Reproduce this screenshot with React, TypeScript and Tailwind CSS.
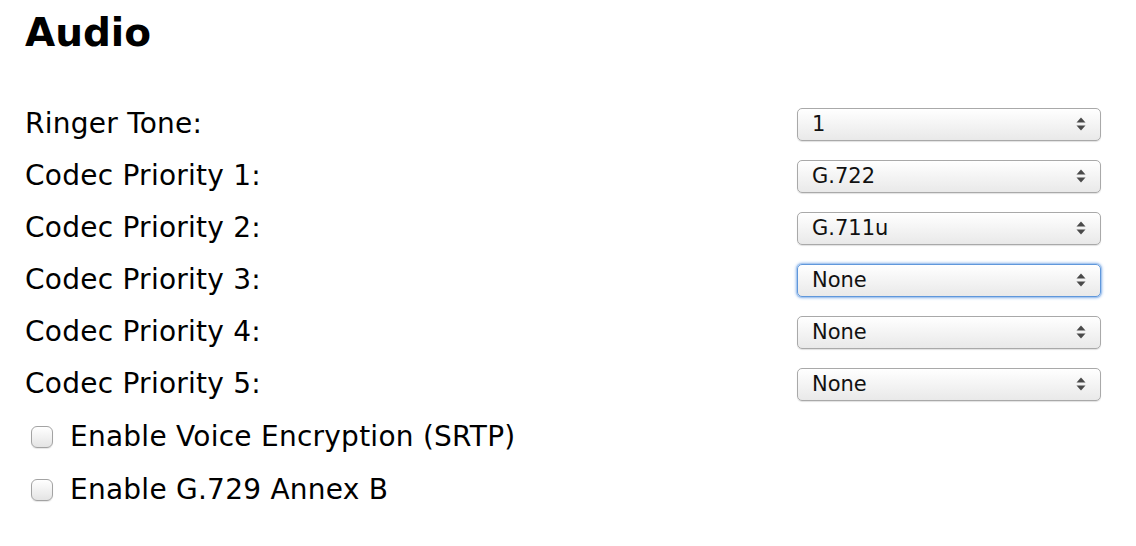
import React from 'react';

type SelectProps = {
  value: string;
  focused?: boolean;
};

function FakeSelect({ value, focused }: SelectProps) {
  return (
    <div
      className={
        focused
          ? 'flex h-[33px] w-[304px] items-center justify-between rounded-[5px] border border-[#5f97db] bg-gradient-to-b from-white to-[#e9e9e9] pl-[14px] pr-[14px] shadow-[0_0_0_1px_#a9c8ef,0_0_3px_1px_#8db6ea]'
          : 'flex h-[33px] w-[304px] items-center justify-between rounded-[5px] border border-[#a9a9a9] bg-gradient-to-b from-white to-[#e9e9e9] pl-[14px] pr-[14px] shadow-[0_1px_1px_rgba(0,0,0,0.12)]'
      }
    >
      <span className="text-[21px] leading-none text-[#111]">{value}</span>
      <svg width="10" height="14" viewBox="0 0 10 14">
        <path d="M5 0.5 L9.5 5.5 L0.5 5.5 Z" fill="#4a4a4a" />
        <path d="M0.5 8.5 L9.5 8.5 L5 13.5 Z" fill="#4a4a4a" />
      </svg>
    </div>
  );
}

function Checkbox() {
  return (
    <span className="block h-[22px] w-[22px] rounded-[6px] border border-[#a3a3a3] bg-gradient-to-b from-white to-[#e4e4e4] shadow-[0_1px_1px_rgba(0,0,0,0.1)]" />
  );
}

const rows = [
  { label: 'Ringer Tone:', value: '1' },
  { label: 'Codec Priority 1:', value: 'G.722' },
  { label: 'Codec Priority 2:', value: 'G.711u' },
  { label: 'Codec Priority 3:', value: 'None', focused: true },
  { label: 'Codec Priority 4:', value: 'None' },
  { label: 'Codec Priority 5:', value: 'None' },
];

const checks = ['Enable Voice Encryption (SRTP)', 'Enable G.729 Annex B'];

export default function App() {
  return (
    <div className="h-[546px] w-[1136px] bg-white pl-[25px] pr-[35px] font-['DejaVu_Sans',Verdana,sans-serif] text-black">
      <h1 className="pt-[9px] text-[39px] font-bold leading-[48px]">Audio</h1>
      <div className="mt-[41px]">
        {rows.map((r) => (
          <div key={r.label} className="flex h-[52px] items-center justify-between">
            <span className="text-[28px] tracking-[0.25px]">{r.label}</span>
            <FakeSelect value={r.value} focused={r.focused} />
          </div>
        ))}
        {checks.map((c) => (
          <div key={c} className="flex h-[53px] items-center pl-[6px]">
            <Checkbox />
            <span className="ml-[17px] text-[28px] tracking-[0.25px]">{c}</span>
          </div>
        ))}
      </div>
    </div>
  );
}
